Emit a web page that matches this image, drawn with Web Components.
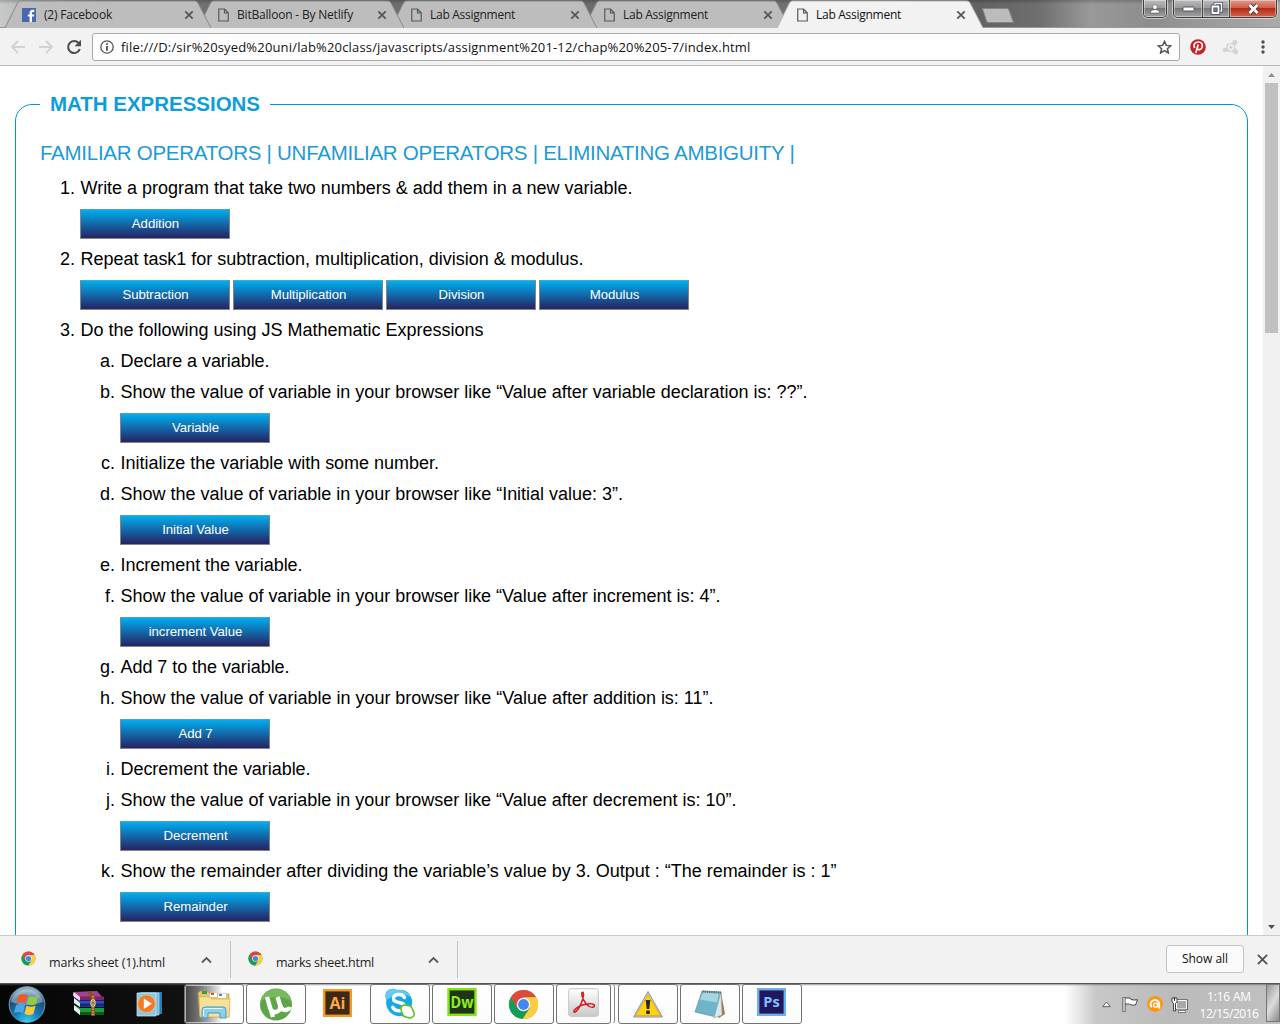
<!DOCTYPE html>
<html lang="en">
<head>
<meta charset="utf-8">
<title>Lab Assignment</title>
<style>
html,body{margin:0;height:100%;overflow:hidden;background:#fff}
body{font-family:"Open Sans","Noto Sans",sans-serif;font-size:12px;color:#222}
</style>
</head>
<body>
<browser-window>
  <tab-strip slot="tabs">
    <browser-tab icon="fb" w="68">(2) Facebook</browser-tab>
    <browser-tab w="116">BitBalloon - By Netlify</browser-tab>
    <browser-tab w="85">Lab Assignment</browser-tab>
    <browser-tab w="85">Lab Assignment</browser-tab>
    <browser-tab active w="85">Lab Assignment</browser-tab>
  </tab-strip>
  <nav-bar slot="nav">file:///D:/sir%20syed%20uni/lab%20class/javascripts/assignment%201-12/chap%20%205-7/index.html</nav-bar>
  <task-sheet heading="MATH EXPRESSIONS" topic="FAMILIAR OPERATORS | UNFAMILIAR OPERATORS | ELIMINATING AMBIGUITY |">
    <task-item n="1." w="552" text="Write a program that take two numbers &amp; add them in a new variable."><task-button>Addition</task-button></task-item>
    <task-item n="2." w="503" text="Repeat task1 for subtraction, multiplication, division &amp; modulus."><task-button>Subtraction</task-button><task-button>Multiplication</task-button><task-button>Division</task-button><task-button>Modulus</task-button></task-item>
    <task-item n="3." w="403" text="Do the following using JS Mathematic Expressions"></task-item>
    <task-item sub n="a." w="149" text="Declare a variable."></task-item>
    <task-item sub n="b." w="687" text="Show the value of variable in your browser like “Value after variable declaration is: ??”."><task-button>Variable</task-button></task-item>
    <task-item sub n="c." w="318.500" text="Initialize the variable with some number."></task-item>
    <task-item sub n="d." w="502.500" text="Show the value of variable in your browser like “Initial value: 3”."><task-button>Initial Value</task-button></task-item>
    <task-item sub n="e." w="182" text="Increment the variable."></task-item>
    <task-item sub n="f." w="600" text="Show the value of variable in your browser like “Value after increment is: 4”."><task-button>increment Value</task-button></task-item>
    <task-item sub n="g." w="169" text="Add 7 to the variable."></task-item>
    <task-item sub n="h." w="593" text="Show the value of variable in your browser like “Value after addition is: 11”."><task-button>Add 7</task-button></task-item>
    <task-item sub n="i." w="190" text="Decrement the variable."></task-item>
    <task-item sub n="j." w="616" text="Show the value of variable in your browser like “Value after decrement is: 10”."><task-button>Decrement</task-button></task-item>
    <task-item sub n="k." w="716" text="Show the remainder after dividing the variable’s value by 3. Output : “The remainder is : 1”"><task-button>Remainder</task-button></task-item>
  </task-sheet>
  <download-shelf slot="shelf">
    <download-item w="116">marks sheet (1).html</download-item>
    <download-item w="98">marks sheet.html</download-item>
  </download-shelf>
</browser-window>
<task-bar></task-bar>

<script>
function define(name, html, init){
  const t = document.createElement('template');
  t.innerHTML = html;
  customElements.define(name, class extends HTMLElement{
    connectedCallback(){
      if(this.shadowRoot) return;
      const r = this.attachShadow({mode:'open'});
      r.appendChild(t.content.cloneNode(true));
      if(init) init(this, r);
    }
  });
}

/* Tracks a run of text so that it spans w pixels. */
function track(f, w, text){
  f.style.letterSpacing = ((w - f.getBoundingClientRect().width) / text.length) + 'px';
}

/* One line of text, tracked so that it spans the width in its w attribute. */
define('fit-text', `<style>:host{display:inline-block;white-space:pre;flex:none}</style><slot></slot>`, el => {
  if(el.hasAttribute('w')) track(el, +el.getAttribute('w'), el.textContent);
});

const CHROME = `<circle cx="16" cy="16" r="15" fill="#4caf50"/>
<path d="M3 8.5A15 15 0 0 1 29 8.5H16L9.5 19.5z" fill="#dc4a3c"/>
<path d="M29 8.5A15 15 0 0 1 15 31L22.5 19.5 16 8.5z" fill="#ffcd40"/>
<path d="M3 8.5A15 15 0 0 0 15 31L22 19.5H9.5z" fill="#169b58"/>
<circle cx="16" cy="16" r="7" fill="#f4f4f4"/><circle cx="16" cy="16" r="5.6" fill="#4387f0"/>`;

const ICONS = {
  page:[11,14,'0 0 11 14','<path d="M.75 1h5.8l3.7 3.8v8.2H.75zM6.5 1v3.9h3.8" fill="none" stroke="#5a5a5a" stroke-width="1.2"/>'],
  fb:[14,14,'0 0 14 14','<path d="M0 0h14v14H0z" fill="#4968ad"/><path d="M7.6 14V8.6H5.8V6.4h1.8V4.8c0-2 1.1-3 3-3h1.7v2.1h-1.2c-.9 0-1.1.4-1.1 1.1v1.4h2.3l-.3 2.2h-2V14z" fill="#fff"/>'],
  close:[10,10,'0 0 10 10','<path d="M1.3 1.3l7.4 7.4M8.7 1.3L1.3 8.7" stroke="#555" stroke-width="1.7"/>'],
  closeL:[11,11,'0 0 10 10','<path d="M.8.8l8.4 8.4M9.200.8L.8 9.200" stroke="#555" stroke-width="1.7"/>'],
  back:[16,14,'0 0 16 14','<path d="M15 7H2M8 1L2 7l6 6" fill="none" stroke="#d2d2d2" stroke-width="1.9"/>'],
  fwd:[16,14,'0 0 16 14','<path d="M1 7h13M8 1l6 6-6 6" fill="none" stroke="#d2d2d2" stroke-width="1.9"/>'],
  reload:[16,16,'0 0 16 16','<path d="M12.6 4A6 6 0 1 0 13.8 10" fill="none" stroke="#4e4e4e" stroke-width="2.1"/><path d="M15 .8v6.4H8.6z" fill="#4e4e4e"/>'],
  info:[14,14,'0 0 14 14','<circle cx="7" cy="7" r="6.2" fill="none" stroke="#555" stroke-width="1.3"/><path d="M7 6v4.7M7 3.2v1.7" stroke="#444" stroke-width="1.7"/>'],
  star:[15,14,'0 0 15 14','<path d="M7.5 1.4l1.8 4 4.5.4-3.4 2.9 1 4.3-3.9-2.3L3.6 13l1-4.3L1.2 5.8l4.5-.4z" fill="none" stroke="#555" stroke-width="1.5"/>'],
  pin:[16,16,'0 0 16 16','<circle cx="8" cy="8" r="7.8" fill="#cb2027"/><path d="M4.8 9C2.6 5.6 5.2 3 8.3 3c3 0 4.4 2 4 4.4-.4 3-3.9 4.3-5 2.2M8.2 5.5L5.8 14" fill="none" stroke="#fff" stroke-width="1.7"/>'],
  ext:[17,16,'0 0 17 16','<g fill="#d4d4d4"><path d="M4.500 4.500Q8 5.500 11 3l2.500 1-.5 4 1.500 4-2.500 1.500-4-1-4 .5L2.500 10q2.500-1.500 2-5.500z"/><circle cx="13" cy="3.300" r="2.500"/><circle cx="13.500" cy="12.700" r="2.600"/><circle cx="2.600" cy="11" r="2.100"/></g><circle cx="8.900" cy="8.300" r="3.100" fill="#f2f2f2"/><circle cx="8.900" cy="8.300" r="1.500" fill="#cfcfcf"/>'],
  dots:[4,14,'0 0 4 14','<g fill="#505050"><circle cx="2" cy="2" r="1.7"/><circle cx="2" cy="7" r="1.7"/><circle cx="2" cy="12" r="1.7"/></g>'],
  chev:[11,8,'0 0 11 8','<path d="M1 6.5L5.5 2 10 6.5" fill="none" stroke="#5a5a5a" stroke-width="1.8"/>'],
  chrome:[15,15,'0 0 32 32',CHROME],
  chromeL:[31,31,'0 0 32 32',CHROME],
  user:[10,10,'0 0 10 10','<circle cx="5" cy="3" r="2.4" fill="#fff" stroke="#555" stroke-width=".6"/><path d="M.6 9V7.200Q2 5.700 5 5.700t4.400 1.500V9z" fill="#fff" stroke="#555" stroke-width=".6"/>'],
  min:[13,6,'0 0 13 6','<rect x="1" y="1" width="11" height="4" rx=".5" fill="#fff" stroke="#555967"/>'],
  max:[13,13,'0 0 13 13','<g fill="none"><path d="M5 3V1.500h6.500v7.500H10" stroke="#4c5060" stroke-width="3"/><path d="M5 3V1.500h6.500v7.500H10" stroke="#fff" stroke-width="1.400"/><path d="M2.500 4.500h6v6.500h-6z" stroke="#4c5060" stroke-width="3.600"/><path d="M2.500 4.500h6v6.500h-6z" stroke="#fff" stroke-width="1.800"/></g>'],
  x:[13,12,'0 0 13 12','<path d="M2.500 2l8 8M10.500 2l-8 8" stroke="#5b3a3c" stroke-width="4.600"/><path d="M2.500 2l8 8M10.500 2l-8 8" stroke="#fff" stroke-width="2.800"/>'],
  orb:[40,39,'0 0 40 39','<defs><radialGradient id="o" cx=".5" cy="1" r=".9"><stop offset="0" stop-color="#35d4f6"/><stop offset=".4" stop-color="#1580bb"/><stop offset=".8" stop-color="#214a70"/><stop offset="1" stop-color="#8ba9bd"/></radialGradient></defs><circle cx="20" cy="19.500" r="18.600" fill="#0f2b40"/><circle cx="20" cy="19.500" r="17.800" fill="url(#o)" stroke="#7faac4" stroke-width=".8"/><path d="M4 17A16.500 16.500 0 0 1 36 17Q20 23 4 17z" fill="#cfe2ee" opacity=".45"/><path d="M11.500 10.500q4.500-2.500 9-.2l-2 8q-4.500-2-9 0z" fill="#ed5a25"/><path d="M21.900 11q4.500 2.200 9.300 0l-2.200 8.300q-4.700 1.900-9.100-.2z" fill="#94c944"/><path d="M9.100 19.900q4.500-2 8.900.2l-2 8q-4.500-2.400-9 0z" fill="#4ca8e5"/><path d="M19.500 20.700q4.500 2 9.100 0l-2.200 8.400q-4.500 2-9-.3z" fill="#fdc832"/>'],
  rar:[34,28,'0 0 34 28','<path d="M2 2L25 1l7 8H8z" fill="#a04492"/><path d="M8 6.500h24v4H8z" fill="#7b2468"/><path d="M2 2q-2 2 0 5l6 4V7z" fill="#eadce8"/><path d="M2 8l6 3h24v6H8L2 13z" fill="#2550c8"/><path d="M2 8v5l6 4v-4z" fill="#eee"/><path d="M8 13.500h24v3H8z" fill="#102b7c"/><path d="M2 15l6 3h24v7H8l-6-5z" fill="#1f9b35"/><path d="M2 15v5l6 5v-5z" fill="#eee"/><path d="M8 22h24v3H8z" fill="#075b1b"/><path d="M15 1.500l4-.2 4 6V26h-4V9z" fill="#875123"/><path d="M21 6v19" stroke="#d9a566" stroke-width="1.600" stroke-dasharray="1.500 1"/><rect x="19" y="10" width="4" height="6" rx="1.500" fill="none" stroke="#ead28b" stroke-width="1.200"/>'],
  wmp:[27,26,'0 0 27 26','<path d="M5 1h21v22H5z" fill="#2f7db0"/><path d="M3 2h20v22H3z" fill="#77b9dc" stroke="#b9def0" stroke-width=".7"/><path d="M1 2h19v23H1z" fill="#8cc6e4" stroke="#d0ebf7" stroke-width=".7"/><circle cx="10.500" cy="12.700" r="8.800" fill="#f47a25" stroke="#ffbb75" stroke-width=".7"/><path d="M7.800 7.500l8 5.200-8 5.200z" fill="#fff"/>'],
  folder:[34,31,'0 0 34 31','<path d="M1 4l2-2h8l2 3h19v23H3z" fill="#e6c66f" stroke="#b79745" stroke-width=".7"/><path d="M5 2h5v3H5z" fill="#29a63c"/><path d="M13 4h7v4h-7z" fill="#fff"/><path d="M14 4h3v2h-3z" fill="#d64b31"/><path d="M21 5h8v4h-8z" fill="#fff"/><path d="M22 5h3v2h-3z" fill="#269bd4"/><path d="M2 8h11l2 2h18l-1 18H3z" fill="#f8e09a" stroke="#d2b25e" stroke-width=".7"/><path d="M5 29V21q0-3 3-3h18q3 0 3 3v8h-6v-5H11v5z" fill="#8ed0ec" stroke="#3d9dc8"/><path d="M6.500 27v-6q0-1.500 2-1.500h17" fill="none" stroke="#e1f7ff"/>'],
  ut:[34,33,'0 0 34 33','<circle cx="17" cy="16.500" r="16" fill="#5da546"/><path d="M1.500 13a16 16 0 0 1 31 0q-15-8-31 0z" fill="#77b95c"/><path d="M8 9l6 20M9 12l2 8q2 5 6.500 3.800T21 17l-2.500-8M21 17q2 5.500 5.500 5 4-.6 4.500-3" fill="none" stroke="#fff" stroke-width="4.300"/>'],
  ai:[29,28,'0 0 29 28','<rect x="1.200" y="1.200" width="26.600" height="25.600" fill="#3c2a17" stroke="#f79a22" stroke-width="2.400"/><text x="14.500" y="19.500" text-anchor="middle" font-family="Open Sans" font-weight="700" font-size="16" fill="#ffa64a">Ai</text>'],
  sk:[32,32,'0 0 32 32','<path d="M3 3q5-4 10-1Q24 .5 27.500 10q1.500 4 0 8 3 6-1 9.500-4 3-9 .5-8 1-12.500-5Q1 18 2.500 12 0 7 3 3z" fill="#18a9e5"/><path d="M3 3q5-4 10-1Q23 1 26.500 9 15 3 2.500 12 0 7 3 3z" fill="#65c9f1"/><path d="M20.500 9.500Q19 6.500 15 6.500q-5.500 0-5.500 4 0 3 5.500 4t5.700 4.300q-.2 4-5.700 4-4.500 0-6.300-3.600" fill="none" stroke="#fff" stroke-width="3.400" stroke-linecap="round"/><path d="M18 18q3-2 5-.5 5 0 6 5 2 3 .5 5.500-2.500 3-5.500 1.500-5 0-6-5-2-4 0-6.500z" fill="#fff" stroke="#6cbd21" stroke-width="1.600"/>'],
  dw:[30,28,'0 0 30 28','<rect x="1.500" y="1.200" width="27" height="25.600" fill="#20341a" stroke="#81e613" stroke-width="2.400"/><text x="15" y="19.500" text-anchor="middle" font-family="Open Sans" font-weight="700" font-size="16" textLength="23" lengthAdjust="spacingAndGlyphs" fill="#8cf01e">Dw</text>'],
  pdf:[31,29,'0 0 31 29','<defs><linearGradient id="p" x2="0" y2="1"><stop stop-color="#fff"/><stop offset="1" stop-color="#c9c9c9"/></linearGradient></defs><rect x=".7" y=".7" width="29.600" height="27.600" rx="2" fill="url(#p)" stroke="#c3c3c3"/><path d="M14 4.500c-1 3 2.500 11 6.500 13.500 3 2 6 1.500 6-.3 0-2.200-5-2.200-9-1.400-5 1-9.500 3.700-11.200 6-1.300 2 .2 2.500 2 .8 3.300-3.200 6.800-11 7.200-15.600.2-2.500-.3-4-1.500-3z" fill="none" stroke="#cf2026" stroke-width="1.500"/>'],
  warn:[32,29,'0 0 32 29','<path d="M16 1.500L30.500 27H1.500z" fill="#ddd" stroke="#909090" stroke-linejoin="round"/><path d="M16 4.500L28.500 25.700H3.500z" fill="#fbd311" stroke="#c3920a" stroke-width=".6"/><path d="M13.700 10h4.600l-1 9h-2.600z" fill="#2a2a28"/><circle cx="16" cy="22.300" r="2" fill="#2a2a28"/>'],
  note:[32,31,'0 0 32 31','<path d="M27 3l4 22-6 4-4-4z" fill="#a77a46"/><path d="M8 2l19 1-5 25L1 23z" fill="#6fb4c8" stroke="#568895" stroke-width=".6"/><path d="M9 3.500l16 1-2 9-17-3z" fill="#a6d4df"/><path d="M27 3l1 23-8 3z" fill="#d6e9ed" stroke="#86a8b3" stroke-width=".6"/><path d="M8.500 2.500l18.500 1" stroke="#666" stroke-width="2" stroke-dasharray="1.200 1"/>'],
  ps:[29,28,'0 0 29 28','<rect x="1.200" y="1.200" width="26.600" height="25.600" fill="#20175d" stroke="#6eb0ee" stroke-width="2.400"/><text x="14.500" y="19" text-anchor="middle" font-family="Open Sans" font-weight="700" font-size="14.500" fill="#80c2ff">Ps</text>'],
  up:[9,7,'0 0 9 7','<path d="M4.500 1L8.300 5.700H.7z" fill="#fff" stroke="#555" stroke-width=".9"/>'],
  flag:[17,17,'0 0 17 17','<path d="M2 1v15" stroke="#444" stroke-width="3"/><path d="M3 2h5l1 1.500q3 1 6.500.2-1 3-2 5.300-3 .5-5.500-.5L7.500 8H3z" fill="#fff" stroke="#444"/><path d="M2 1.500v14" stroke="#fff" stroke-width="1.300"/>'],
  av:[16,16,'0 0 16 16','<circle cx="8" cy="8" r="7.900" fill="#ff9708"/><path d="M4.700 11.200A4.300 4.300 0 1 1 12.200 8v4.500" fill="none" stroke="#fff" stroke-width="2"/><circle cx="8.600" cy="9.200" r="2" fill="#ff9708" stroke="#fff" stroke-width="1.500"/>'],
  net:[17,17,'0 0 17 17','<path d="M5.500 4.500h10v8.500h-10z" fill="#8b8b8b" stroke="#333" stroke-width="2.200"/><path d="M5.500 4.500h10v8.500h-10z" fill="#aaa" stroke="#fff"/><path d="M7 15.500h8" stroke="#333" stroke-width="2"/><path d="M7.500 15.500h7" stroke="#fff"/><path d="M1 2h5v4L4.500 7.500V15h-2V7.500L1 6z" fill="#fff" stroke="#333" stroke-width=".9"/><path d="M3.500 1v4" stroke="#333"/>'],
  tri:[7,4,'0 0 7 4','<path d="M3.500 0L7 4H0z" fill="#8f8f8f"/>'],
  trid:[7,4,'0 0 7 4','<path d="M3.500 4L7 0H0z" fill="#505050"/>']
};
define('ui-icon', `<style>:host{display:inline-flex;flex:none}svg{display:block}</style>`, (el, r) => {
  const [w,h,vb,body] = ICONS[el.getAttribute('name')];
  r.innerHTML += `<svg width="${w}" height="${h}" viewBox="${vb}">${body}</svg>`;
});

define('browser-window', `<style>:host{display:grid;grid-template-rows:28px 38px 869px 49px;width:1280px;height:984px}
.view{display:grid;grid-template-columns:1fr 17px;overflow:hidden;min-height:0}
.sb{background:#f1f1f1;display:flex;flex-direction:column;align-items:center;justify-content:space-between}
.b{height:17px;display:grid;place-items:center}.thumb{width:13px;height:250px;background:#c1c1c1;margin-bottom:auto}
.page{overflow:hidden;min-height:0}</style>
<slot name="tabs"></slot><slot name="nav"></slot>
<div class="view"><div class="page"><slot></slot></div><div class="sb"><div class="b"><ui-icon name="tri"></ui-icon></div><div class="thumb"></div><div class="b"><ui-icon name="trid"></ui-icon></div></div></div>
<slot name="shelf"></slot>`);

define('tab-strip', `<style>:host{display:flex;height:28px;padding-left:5px;box-sizing:border-box;background:linear-gradient(#0003,transparent 4px),linear-gradient(90deg,#c8caca 0,#bbb 20px,#727272 120px,#6b6b6b 600px,#747474 850px,#626262 980px,#6f6f6f 1040px,#999 1090px,#8d8d8d 1150px,#aaa 1280px);box-shadow:inset 0 -1px #999}
.new{display:block;margin:7px 0 0 11px}.win{margin-left:auto;display:flex;align-items:flex-start;padding-right:3px;gap:6px}
.g{display:flex;border:1px solid #3f3f3f;border-top:0;border-radius:0 0 5px 5px;box-shadow:0 0 0 1px #ffffff80;overflow:hidden;height:17px}
.g span{display:grid;place-items:center;background:linear-gradient(#bcbcbc,#999 48%,#777 50%,#a2a2a2);box-shadow:inset 0 0 0 1px #ffffff66}
.g span+span{border-left:1px solid #4a4a4a}.g .r{background:linear-gradient(#dc9b8e,#cf5b47 48%,#b62b12 50%,#d4644e)}</style>
<slot></slot>
<svg class="new" width="34" height="17"><path d="M1.500 1.500H26q1.500 0 2 1.500L32.500 15.500H7.500Q6 15.500 5.500 14z" fill="#bcbcbc" stroke="#858585"/></svg>
<div class="win"><div class="g"><span style="width:22px"><ui-icon name="user"></ui-icon></span></div>
<div class="g"><span style="width:28px"><ui-icon name="min"></ui-icon></span><span style="width:26px"><ui-icon name="max"></ui-icon></span><span class="r" style="width:46px"><ui-icon name="x"></ui-icon></span></div></div>`);

define('browser-tab', `<style>:host{display:grid;flex:none;width:206px;height:28px;margin-right:-13px;position:relative}
:host([active]){color:#111}svg,.c{grid-area:1/1}svg{display:block}
.c{display:flex;align-items:center;height:28px;padding:1px 17px 0 17px;box-sizing:border-box}
.i{width:22px;display:flex}.i.p{padding-left:3px;width:19px}.x{margin-left:auto;display:flex}
path.s{fill:#bdbdbd;stroke:#898989}:host([active]) path.s{fill:#f2f2f2;stroke:#b5b5b5}</style>
<svg width="206" height="28"><path class="s" d="M0 28L12.500 3Q13.500 1 15.500 1H190Q192 1 193 3L206 28"/></svg>
<div class="c"><span class="i"></span><fit-text><slot></slot></fit-text><span class="x"><ui-icon name="close"></ui-icon></span></div>`, (el, r) => {
  const n = el.getAttribute('icon') || 'page', i = r.querySelector('.i');
  if(n === 'page') i.classList.add('p');
  i.innerHTML = `<ui-icon name="${n}"></ui-icon>`;
  /* Each tab lies over the one to its right; the active one lies over all. */
  const at = [...el.parentNode.children].indexOf(el);
  el.style.zIndex = el.hasAttribute('active') ? 20 : 10 - at;
  track(r.querySelector('fit-text'), +el.getAttribute('w'), el.textContent);
});

define('nav-bar', `<style>:host{display:flex;align-items:center;background:#f2f2f2;box-sizing:border-box;height:38px;border-bottom:1px solid #b9b9b9;padding:0 15px 0 10px}
.n{display:flex;gap:12px;width:82px;align-items:center}
.u{display:flex;align-items:center;width:1088px;height:28px;box-sizing:border-box;border:1px solid #a9a9a9;border-radius:3px;background:#fff;padding:0 7px;font-size:13px;color:#111}
.u fit-text{margin-left:7px}.u .s{margin-left:auto;display:flex}.e{display:flex;align-items:center;flex:1;padding-left:10px;gap:16px}.e :last-child{margin-left:auto}</style>
<div class="n"><ui-icon name="back"></ui-icon><ui-icon name="fwd"></ui-icon><ui-icon name="reload"></ui-icon></div>
<div class="u"><ui-icon name="info"></ui-icon><fit-text><slot></slot></fit-text><span class="s"><ui-icon name="star"></ui-icon></span></div>
<div class="e"><ui-icon name="pin"></ui-icon><ui-icon name="ext"></ui-icon><ui-icon name="dots"></ui-icon></div>`, (el, r) => {
  track(r.querySelector('fit-text'), 629.5, el.textContent);
});

define('task-sheet', `<style>:host{display:block;font-family:"Liberation Sans",Arial,sans-serif;font-size:18px;color:#000;padding:26px 15px 0}
fieldset{margin:0;border:1px solid #0095da;border-radius:17px;padding:0 24px;height:1200px;min-width:0}
legend{padding:0 10px;font-size:20.500px;font-weight:700;color:#0d9ddb;line-height:24px;height:24px}
.t{font-size:20.500px;color:#1c9ad6;height:31px;line-height:31px;margin-top:21px;margin-bottom:5px}</style>
<fieldset><legend><fit-text class="h"></fit-text></legend><div class="t"><fit-text class="o"></fit-text></div><slot></slot></fieldset>`, (el, r) => {
  const h = r.querySelector('.h'), o = r.querySelector('.o');
  h.textContent = el.getAttribute('heading');
  track(h, 210, h.textContent);
  o.textContent = el.getAttribute('topic');
  track(o, 754.5, o.textContent);
});

define('task-item', `<style>:host{display:block;padding-left:40px}:host([sub]){padding-left:80px}
.l{display:flex;height:31px;line-height:31px}.m{width:40px;margin-left:-40px;box-sizing:border-box;padding-right:5px;text-align:right}
.l fit-text{margin-left:.5px}.b{display:flex;gap:3px;padding:5px 0}.b[hidden]{display:none}</style>
<div class="l"><span class="m"></span></div><div class="b"><slot></slot></div>`, (el, r) => {
  r.querySelector('.m').textContent = el.getAttribute('n');
  const f = document.createElement('fit-text');
  f.textContent = el.getAttribute('text');
  f.setAttribute('w', el.getAttribute('w'));
  r.querySelector('.l').appendChild(f);
  r.querySelector('.b').hidden = !el.children.length;
});

define('task-button', `<style>:host{display:block}button{display:block;width:150px;height:30px;box-sizing:border-box;border:1px solid #858585;border-top-color:#4aa5cb;padding:0 0 1px 1px;margin:0;color:#fff;font:13.2px "Liberation Sans",Arial,sans-serif;letter-spacing:-.05px;background:linear-gradient(#00aeef,#262262)}</style><button><slot></slot></button>`);

define('download-shelf', `<style>:host{display:flex;align-items:center;background:#f2f2f2;border-top:1px solid #cbcbcb;border-bottom:1px solid #555;box-sizing:border-box;height:49px;font-size:12.500px;color:#222}
.r{margin-left:auto;display:flex;align-items:center;gap:13px;padding:0 12px 1px 0}
button{width:78px;height:28px;border:1px solid #c4c4c4;border-radius:3px;background:#fbfbfb;font:12px "Open Sans",sans-serif;color:#111;padding:0 0 1px}</style>
<slot></slot><div class="r"><button><fit-text w="46">Show all</fit-text></button><ui-icon name="closeL"></ui-icon></div>`);

define('download-item', `<style>:host{display:flex;align-items:center;width:227px;height:37px;box-sizing:border-box;border-right:1px solid #c2c2c2;padding:0 18px 0 17px}
:host(:first-child){width:231px;padding-left:21px}.c{padding-bottom:2px;margin-right:13px;display:flex}fit-text{padding-top:5px}.v{margin-left:auto;display:flex}</style>
<span class="c"><ui-icon name="chrome"></ui-icon></span><fit-text><slot></slot></fit-text><span class="v"><ui-icon name="chev"></ui-icon></span>`, (el, r) => {
  track(r.querySelector('fit-text'), +el.getAttribute('w'), el.textContent);
});

define('app-button', `<style>:host{display:grid;place-items:center;flex:none;width:60px;height:40px;box-sizing:border-box;border:1px solid #727272;border-radius:3px;background:linear-gradient(#fff,#fbfbfb);box-shadow:inset 0 0 0 1px #ffffff90}
:host([plain]){border-color:transparent;background:none;box-shadow:none;padding-bottom:3px}
:host([dark]){background:linear-gradient(90deg,#444,#777 25%,#aaa 42%,#fff 65%)}
:host([raised]){padding-bottom:4px}
:host([stack]){width:55px;margin-right:5px;box-shadow:4px 0 0 -1px #fff,5px 0 0 -1px #888}</style>`, (el, r) => {
  const i = document.createElement('ui-icon');
  i.setAttribute('name', el.getAttribute('icon'));
  r.appendChild(i);
});

define('task-bar', `<style>:host{display:flex;width:1280px;height:40px;overflow:hidden;background:linear-gradient(#5559,transparent 2px),linear-gradient(90deg,#050505 0,#111 185px,#444 205px,#fff 225px,#fff 1064px,#eee 1075px,#c8c8c8 1096px,#bbb 1170px,#c0c0c0 1280px)}
.q{display:flex;align-items:center;width:183.500px;flex:none;padding-left:7px;box-sizing:border-box}
.q :nth-child(2){margin-left:25px}.q :nth-child(3){margin-left:30px}
.a{display:flex;gap:2px}.t{margin-left:auto;display:flex;align-items:center}
.clock{display:flex;flex-direction:column;align-items:center;width:60px;color:#fff;line-height:17px;font-size:12px;padding-top:2px;margin-left:11px}
.d{width:14px;height:38px;box-sizing:border-box;border:1px solid #777;background:linear-gradient(120deg,#999,#ddd 50%,#888);margin-left:7px;align-self:flex-start}</style>
<div class="q"><ui-icon name="orb"></ui-icon><ui-icon name="rar"></ui-icon><ui-icon name="wmp"></ui-icon></div>
<div class="a"><app-button dark icon="folder"></app-button><app-button icon="ut"></app-button><app-button plain icon="ai"></app-button><app-button icon="sk"></app-button><app-button raised icon="dw"></app-button><app-button icon="chromeL"></app-button><app-button raised stack icon="pdf"></app-button><app-button icon="warn"></app-button><app-button icon="note"></app-button><app-button raised icon="ps"></app-button></div>
<div class="t"><ui-icon name="up"></ui-icon><ui-icon name="flag" style="margin-left:11px"></ui-icon><ui-icon name="av" style="margin-left:8px"></ui-icon><ui-icon name="net" style="margin-left:8px"></ui-icon>
<div class="clock"><fit-text w="44">1:16 AM</fit-text><fit-text w="59">12/15/2016</fit-text></div><div class="d"></div></div>`);
</script>
</body>
</html>
